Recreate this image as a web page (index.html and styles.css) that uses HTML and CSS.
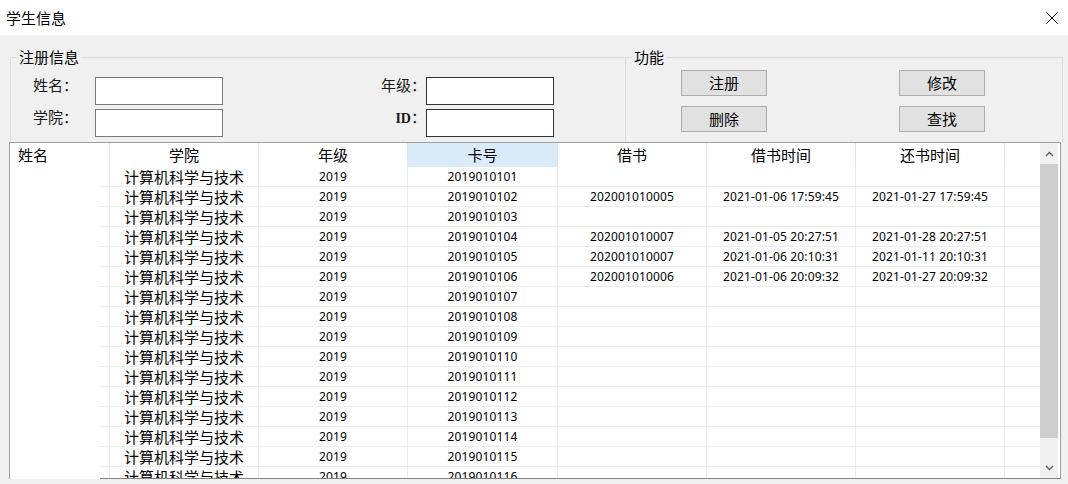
FILE: index.html
```html
<!DOCTYPE html>
<html lang="zh-CN">
<head>
<meta charset="utf-8">
<title>学生信息</title>
<link rel="stylesheet" href="styles.css">
</head>
<body>
<div class="titlebar">
  <span class="title">学生信息</span>
  <span class="close"><svg width="12" height="12" viewBox="0 0 12 12"><path d="M0.5 0.5 L11.5 11.5 M11.5 0.5 L0.5 11.5" stroke="#000" stroke-width="1" fill="none"/></svg></span>
</div>
<div class="content">
  <div class="groups">
    <fieldset class="group group-reg">
      <legend>注册信息</legend>
      <div class="reg-grid">
        <span class="label">姓名：</span>
        <div class="input"></div>
        <span class="label label-r">年级：</span>
        <div class="input input-dark"></div>
        <span class="label">学院：</span>
        <div class="input"></div>
        <span class="label label-r"><span class="latin">ID</span>：</span>
        <div class="input input-dark"></div>
      </div>
    </fieldset>
    <fieldset class="group group-func">
      <legend>功能</legend>
      <div class="btn-grid">
        <div class="btn">注册</div>
        <div class="btn">修改</div>
        <div class="btn">删除</div>
        <div class="btn">查找</div>
      </div>
    </fieldset>
  </div>
  <div class="table">
    <div class="table-inner">
      <div class="table-main">
        <div class="thead">
          <div class="th c0 th-left">姓名</div>
          <div class="th c1">学院</div>
          <div class="th c2">年级</div>
          <div class="th c3 th-sel">卡号</div>
          <div class="th c4">借书</div>
          <div class="th c5">借书时间</div>
          <div class="th c6">还书时间</div>
          <div class="th-fill"></div>
        </div>
        <div class="tbody">
          <div class="tbody-gap"></div>
          <div class="rows">
            <div class="row"><div class="td d0"></div><div class="td c1">计算机科学与技术</div><div class="td c2 n">2019</div><div class="td c3 n">2019010101</div><div class="td c4 n"></div><div class="td c5 n"></div><div class="td c6 n"></div><div class="td-fill"></div></div>
            <div class="row"><div class="td d0"></div><div class="td c1">计算机科学与技术</div><div class="td c2 n">2019</div><div class="td c3 n">2019010102</div><div class="td c4 n">202001010005</div><div class="td c5 n">2021-01-06 17:59:45</div><div class="td c6 n">2021-01-27 17:59:45</div><div class="td-fill"></div></div>
            <div class="row"><div class="td d0"></div><div class="td c1">计算机科学与技术</div><div class="td c2 n">2019</div><div class="td c3 n">2019010103</div><div class="td c4 n"></div><div class="td c5 n"></div><div class="td c6 n"></div><div class="td-fill"></div></div>
            <div class="row"><div class="td d0"></div><div class="td c1">计算机科学与技术</div><div class="td c2 n">2019</div><div class="td c3 n">2019010104</div><div class="td c4 n">202001010007</div><div class="td c5 n">2021-01-05 20:27:51</div><div class="td c6 n">2021-01-28 20:27:51</div><div class="td-fill"></div></div>
            <div class="row"><div class="td d0"></div><div class="td c1">计算机科学与技术</div><div class="td c2 n">2019</div><div class="td c3 n">2019010105</div><div class="td c4 n">202001010007</div><div class="td c5 n">2021-01-06 20:10:31</div><div class="td c6 n">2021-01-11 20:10:31</div><div class="td-fill"></div></div>
            <div class="row"><div class="td d0"></div><div class="td c1">计算机科学与技术</div><div class="td c2 n">2019</div><div class="td c3 n">2019010106</div><div class="td c4 n">202001010006</div><div class="td c5 n">2021-01-06 20:09:32</div><div class="td c6 n">2021-01-27 20:09:32</div><div class="td-fill"></div></div>
            <div class="row"><div class="td d0"></div><div class="td c1">计算机科学与技术</div><div class="td c2 n">2019</div><div class="td c3 n">2019010107</div><div class="td c4 n"></div><div class="td c5 n"></div><div class="td c6 n"></div><div class="td-fill"></div></div>
            <div class="row"><div class="td d0"></div><div class="td c1">计算机科学与技术</div><div class="td c2 n">2019</div><div class="td c3 n">2019010108</div><div class="td c4 n"></div><div class="td c5 n"></div><div class="td c6 n"></div><div class="td-fill"></div></div>
            <div class="row"><div class="td d0"></div><div class="td c1">计算机科学与技术</div><div class="td c2 n">2019</div><div class="td c3 n">2019010109</div><div class="td c4 n"></div><div class="td c5 n"></div><div class="td c6 n"></div><div class="td-fill"></div></div>
            <div class="row"><div class="td d0"></div><div class="td c1">计算机科学与技术</div><div class="td c2 n">2019</div><div class="td c3 n">2019010110</div><div class="td c4 n"></div><div class="td c5 n"></div><div class="td c6 n"></div><div class="td-fill"></div></div>
            <div class="row"><div class="td d0"></div><div class="td c1">计算机科学与技术</div><div class="td c2 n">2019</div><div class="td c3 n">2019010111</div><div class="td c4 n"></div><div class="td c5 n"></div><div class="td c6 n"></div><div class="td-fill"></div></div>
            <div class="row"><div class="td d0"></div><div class="td c1">计算机科学与技术</div><div class="td c2 n">2019</div><div class="td c3 n">2019010112</div><div class="td c4 n"></div><div class="td c5 n"></div><div class="td c6 n"></div><div class="td-fill"></div></div>
            <div class="row"><div class="td d0"></div><div class="td c1">计算机科学与技术</div><div class="td c2 n">2019</div><div class="td c3 n">2019010113</div><div class="td c4 n"></div><div class="td c5 n"></div><div class="td c6 n"></div><div class="td-fill"></div></div>
            <div class="row"><div class="td d0"></div><div class="td c1">计算机科学与技术</div><div class="td c2 n">2019</div><div class="td c3 n">2019010114</div><div class="td c4 n"></div><div class="td c5 n"></div><div class="td c6 n"></div><div class="td-fill"></div></div>
            <div class="row"><div class="td d0"></div><div class="td c1">计算机科学与技术</div><div class="td c2 n">2019</div><div class="td c3 n">2019010115</div><div class="td c4 n"></div><div class="td c5 n"></div><div class="td c6 n"></div><div class="td-fill"></div></div>
            <div class="row"><div class="td d0"></div><div class="td c1">计算机科学与技术</div><div class="td c2 n">2019</div><div class="td c3 n">2019010116</div><div class="td c4 n"></div><div class="td c5 n"></div><div class="td c6 n"></div><div class="td-fill"></div></div>
          </div>
        </div>
      </div>
      <div class="scrollbar">
        <div class="sb-track">
          <div class="sb-btn"><svg width="9" height="6" viewBox="0 0 9 6"><path d="M1 5 L4.5 1.5 L8 5" stroke="#606060" stroke-width="1.4" fill="none"/></svg></div>
          <div class="sb-thumb"></div>
          <div class="sb-space"></div>
          <div class="sb-btn"><svg width="9" height="6" viewBox="0 0 9 6"><path d="M1 1 L4.5 4.5 L8 1" stroke="#606060" stroke-width="1.4" fill="none"/></svg></div>
        </div>
      </div>
    </div>
    <div class="table-bottom">
      <div class="tb-gap"></div>
      <div class="tb-line"></div>
    </div>
  </div>
</div>
</body>
</html>
```

FILE: styles.css
```css
* { box-sizing: border-box; }
html, body { margin: 0; padding: 0; }
body {
  width: 1068px;
  height: 484px;
  overflow: hidden;
  background: #f0f0f0;
  font-family: "Noto Sans CJK SC", "Noto Sans", sans-serif;
  font-size: 15px;
  color: #000;
}

.titlebar {
  height: 35px;
  background: #fff;
  display: flex;
  align-items: center;
  justify-content: space-between;
  padding: 0 10px 0 6px;
}
.title { line-height: 20px; }
.close { display: flex; }

.content { padding-left: 9px; }

.groups {
  height: 107px;
  padding-top: 12px;
  display: flex;
}
.group {
  margin: 0;
  padding: 0;
  border: 1px solid #dcdcdc;
  border-bottom: none;
  height: 95px;
  min-width: 0;
}
.group legend {
  margin-left: 6px;
  padding: 0 2px;
  line-height: 20px;
}
.group-reg {
  margin-left: 1px;
  width: 615px;
  border-right: none;
}
.group-func {
  width: 438px;
}

.reg-grid {
  padding: 10px 0 0 22px;
  display: grid;
  grid-template-columns: 62px 128px 203px 128px;
  grid-auto-rows: 28px;
  row-gap: 4px;
}
.label {
  line-height: 16px;
  white-space: nowrap;
  color: #1a1a1a;
}
.label-r { text-align: right; }
.latin {
  font-family: "Liberation Serif", serif;
  font-size: 14px;
  font-weight: bold;
}
.input {
  height: 28px;
  background: #fff;
  border: 1px solid #7a7a7a;
}
.input-dark { border-color: #333; }

.btn-grid {
  padding: 3px 0 0 55px;
  display: grid;
  grid-template-columns: 86px 86px;
  grid-auto-rows: 26px;
  column-gap: 132px;
  row-gap: 10px;
}
.btn {
  background: #e1e1e1;
  border: 1px solid #adadad;
  display: flex;
  align-items: center;
  justify-content: center;
  line-height: 20px;
}

.table {
  width: 1052px;
  height: 337px;
  border: 1px solid #a0a0a0;
  border-bottom: none;
  background: #fff;
  display: flex;
  flex-direction: column;
}
.table-inner {
  height: 335px;
  display: flex;
}
.table-main {
  flex: 1;
  min-width: 0;
  display: flex;
  flex-direction: column;
}
.thead {
  height: 24px;
  display: flex;
  flex: none;
}
.th {
  height: 24px;
  line-height: 23px;
  text-align: center;
  border-right: 1px solid #e5e5e5;
  flex: none;
}
.th-left { text-align: left; padding-left: 8px; }
.th-sel { background: #d9ebf9; }
.th-fill { flex: 1; }

.c0 { width: 100px; }
.c1 { width: 149px; }
.c2 { width: 149px; }
.c3 { width: 150px; }
.c4 { width: 149px; }
.c5 { width: 149px; }
.c6 { width: 149px; }
.d0 { width: 10px; }

.tbody {
  flex: 1;
  display: flex;
  overflow: hidden;
}
.tbody-gap { width: 90px; flex: none; }
.rows { flex: 1; min-width: 0; }
.row {
  height: 20px;
  display: flex;
  border-bottom: 1px solid #ececec;
}
.td {
  flex: none;
  height: 19px;
  line-height: 19px;
  text-align: center;
  border-right: 1px solid #ececec;
  white-space: nowrap;
  overflow: hidden;
}
.td.n {
  font-family: "Noto Sans", sans-serif;
  font-size: 12px;
  letter-spacing: 0.15px;
}
.td-fill { flex: 1; }

.scrollbar {
  width: 20px;
  flex: none;
  padding-right: 2px;
  background: #fff;
}
.sb-track {
  height: 100%;
  background: #f0f0f0;
  display: flex;
  flex-direction: column;
}
.sb-btn {
  height: 21px;
  display: flex;
  align-items: center;
  justify-content: center;
  flex: none;
}
.sb-thumb {
  height: 274px;
  background: #cdcdcd;
  flex: none;
}
.sb-space { flex: 1; }

.table-bottom {
  height: 1px;
  display: flex;
}
.tb-gap { width: 90px; }
.tb-line { flex: 1; background: #808080; }
```
